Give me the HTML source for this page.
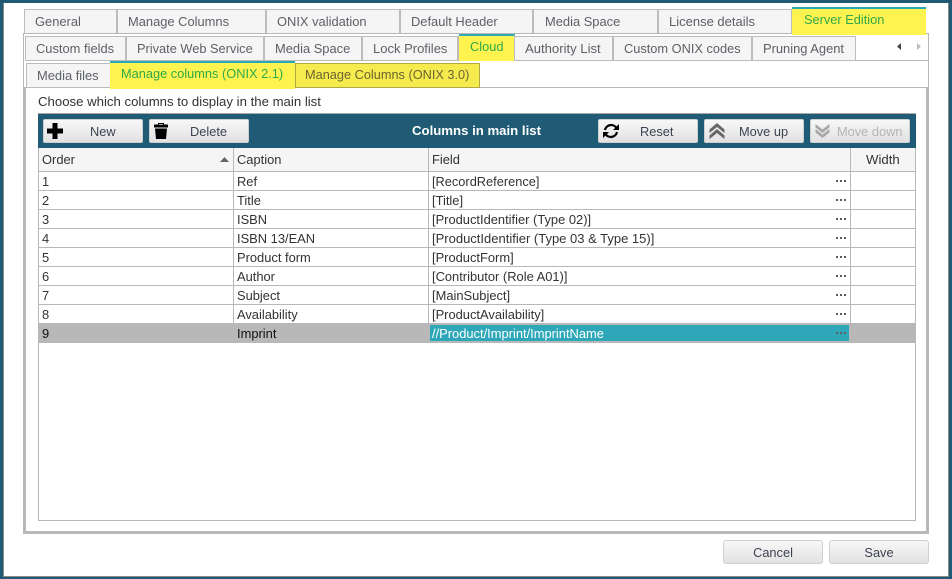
<!DOCTYPE html>
<html><head><meta charset="utf-8"><style>
*{box-sizing:border-box}
html,body{margin:0;padding:0;width:952px;height:579px;overflow:hidden;background:#fff}
body{position:relative;font:13px/18px "Liberation Sans",Arial,sans-serif;color:#333}
.a,.t,.b,.x{position:absolute}
.t{height:25px;background:#f5f5f5;border:solid #bcbcbc;border-width:1px 2px 1px 0;color:#5e6068;font-size:12.9px;line-height:21px;white-space:nowrap}
.t span{position:absolute;top:1px}
.t.f{border-left-width:1px}
.y{background:#fff350;border:0;border-top:2px solid #2aa8b8;color:#2ea84a;font-size:12.8px;white-space:nowrap;position:absolute}
.y span{position:absolute;line-height:18px}
.b{top:119px;height:24px;width:100px;border:1px solid #cfcfcf;border-radius:2px;background:linear-gradient(#f8f8f8,#e2e2e2);font-size:12.8px;line-height:23px;color:#3d4250;text-align:center;white-space:nowrap}
.b span{position:absolute;top:0}
.b svg{position:absolute}
.d{position:absolute;width:10px;height:2px;left:836px;background:linear-gradient(90deg,#5c5c5c 0 2px,transparent 2px 4px,#5c5c5c 4px 6px,transparent 6px 8px,#5c5c5c 8px 10px)}
.c{position:absolute;font-size:12.9px;line-height:18px;color:#333;white-space:nowrap}
.l{position:absolute;background:#b8b8b8}
</style></head><body>
<!-- window frame -->
<div class="a" style="left:0;top:0;width:952px;height:3px;background:#1f5b75"></div>
<div class="a" style="left:0;top:0;width:3px;height:579px;background:#1f5b75"></div>
<div class="a" style="left:949px;top:0;width:3px;height:579px;background:#1f5b75"></div>
<div class="a" style="left:0;top:577px;width:952px;height:2px;background:#1f5b75"></div>
<div class="a" style="left:3px;top:3px;width:1px;height:574px;background:#8a8a8a"></div>
<div class="a" style="left:948px;top:3px;width:1px;height:574px;background:#8a8a8a"></div>
<div class="a" style="left:3px;top:576px;width:946px;height:1px;background:#8a8a8a"></div>

<!-- row 1 tabs -->
<div class="t f" style="left:24px;top:9px;width:94px"><span style="left:10px">General</span></div>
<div class="t" style="left:118px;top:9px;width:149px"><span style="left:10px">Manage Columns</span></div>
<div class="t" style="left:267px;top:9px;width:134px"><span style="left:10px">ONIX validation</span></div>
<div class="t" style="left:401px;top:9px;width:133px"><span style="left:10px">Default Header</span></div>
<div class="t" style="left:534px;top:9px;width:125px"><span style="left:11px">Media Space</span></div>
<div class="t" style="left:659px;top:9px;width:134px"><span style="left:10px;font-size:13px">License details</span></div>

<!-- panel -->
<div class="l" style="left:23px;top:33px;width:906px;height:1px"></div>
<div class="l" style="left:23px;top:33px;width:1px;height:54px"></div>
<div class="l" style="left:928px;top:33px;width:1px;height:54px"></div>
<div class="l" style="left:23px;top:87px;width:3px;height:447px"></div>
<div class="l" style="left:926px;top:87px;width:3px;height:447px"></div>
<div class="l" style="left:23px;top:531px;width:906px;height:3px"></div>
<div class="y" style="left:792px;top:7px;width:134px;height:28px"><span style="left:12px;top:2px">Server Edition</span></div>

<!-- row 2 tabs -->
<div class="l" style="left:25px;top:60px;width:903px;height:1px"></div>
<div class="t f" style="left:25px;top:36px;width:102px"><span style="left:10px">Custom fields</span></div>
<div class="t" style="left:127px;top:36px;width:138px"><span style="left:10px;font-size:12.8px">Private Web Service</span></div>
<div class="t" style="left:265px;top:36px;width:98px"><span style="left:10px">Media Space</span></div>
<div class="t" style="left:363px;top:36px;width:96px"><span style="left:10px;font-size:13px">Lock Profiles</span></div>
<div class="y" style="left:459px;top:34px;width:56px;height:27px;border-right:1px solid #bcbcbc"><span style="left:11px;top:2px">Cloud</span></div>
<div class="t" style="left:515px;top:36px;width:99px"><span style="left:10px;font-size:13.1px">Authority List</span></div>
<div class="t" style="left:614px;top:36px;width:139px"><span style="left:10px;font-size:12.8px">Custom ONIX codes</span></div>
<div class="t" style="left:753px;top:36px;width:103px;border-right-width:1px"><span style="left:10px">Pruning Agent</span></div>
<svg class="x" style="left:896px;top:43px" width="26" height="8"><path d="M5 0v7L1 3.500z" fill="#444"/><path d="M21 0v7l4-3.500z" fill="#bbb"/></svg>

<!-- row 3 tabs -->
<div class="l" style="left:26px;top:87px;width:901px;height:1px"></div>
<div class="t f" style="left:26px;top:63px;width:85px;border-right-width:1px"><span style="left:10px">Media files</span></div>
<div class="y" style="left:110px;top:61px;width:185px;height:28px"><span style="left:11px;top:2px">Manage columns (ONIX 2.1)</span></div>
<div class="a" style="left:295px;top:63px;width:185px;height:25px;background:#f5ea4e;border:1px solid #b0a840;font-size:12.75px;line-height:22px;color:#6b6430;white-space:nowrap;padding-left:9px">Manage Columns (ONIX 3.0)</div>

<div class="c" style="left:38px;top:93px;font-size:13.200px">Choose which columns to display in the main list</div>

<!-- toolbar -->
<div class="a" style="left:38px;top:113px;width:878px;height:35px;background:#1f5b75;border-top:1px solid #a8a8a8"></div>
<div class="b" style="left:43px"><svg style="left:3px;top:3px" width="16" height="16"><path d="M5.500 0h5v5.500H16v5h-5.500V16h-5v-5.500H0v-5h5.500z" fill="#000"/></svg><span style="left:46px">New</span></div>
<div class="b" style="left:149px"><svg style="left:4px;top:3px" width="14" height="16"><path d="M4 0h6v1.500h4V4.500H0V1.500h4zM5 1v.8h4V1zM1 5.500h12L12 16H2z" fill="#000" fill-rule="evenodd"/></svg><span style="left:40px">Delete</span></div>
<div class="a" style="left:412px;top:122px;font-size:13.200px;line-height:18px;font-weight:bold;color:#fff;white-space:nowrap">Columns in main list</div>
<div class="b" style="left:598px"><svg style="left:4px;top:3px" width="16" height="16" fill="none" stroke="#000" stroke-width="2.200"><path d="M2 7a6.300 6.300 0 0 1 11.500-2M14 9a6.300 6.300 0 0 1-11.500 2"/><path d="M16 1v6h-6zM0 15V9h6z" fill="#000" stroke="none"/></svg><span style="left:41px">Reset</span></div>
<div class="b" style="left:704px"><svg style="left:4px;top:3px" width="16" height="16"><path d="M8 0l7.500 6.500V10L8 4 .5 10V6.500zM8 6l7.500 6.500V16L8 10 .5 16v-3.500z" fill="#666"/></svg><span style="left:34px">Move up</span></div>
<div class="b" style="left:810px;color:#b4b4b4"><svg style="left:4px;top:4px" width="15" height="14"><path d="M.5 0L7.500 5.500 14.500 0v3.500L7.500 9 .5 3.500zM.5 5L7.500 10.500 14.500 5v3.500L7.500 14 .5 8.500z" fill="#a8a8a8"/></svg><span style="left:26px">Move down</span></div>

<!-- grid -->
<div class="a" style="left:38px;top:148px;width:878px;height:373px;border:1px solid #b8b8b8;border-top:0"></div>
<div class="a" style="left:39px;top:148px;width:876px;height:23px;background:#f5f5f5"></div>
<div class="l" style="left:39px;top:171px;width:876px;height:1px"></div>
<div class="l" style="left:233px;top:148px;width:1px;height:175px"></div>
<div class="l" style="left:428px;top:148px;width:1px;height:175px"></div>
<div class="l" style="left:850px;top:148px;width:1px;height:175px"></div>
<div class="l" style="left:39px;top:190px;width:876px;height:1px"></div>
<div class="l" style="left:39px;top:209px;width:876px;height:1px"></div>
<div class="l" style="left:39px;top:228px;width:876px;height:1px"></div>
<div class="l" style="left:39px;top:247px;width:876px;height:1px"></div>
<div class="l" style="left:39px;top:266px;width:876px;height:1px"></div>
<div class="l" style="left:39px;top:285px;width:876px;height:1px"></div>
<div class="l" style="left:39px;top:304px;width:876px;height:1px"></div>
<div class="a" style="left:39px;top:323px;width:876px;height:20px;background:#b8b8b8"></div>
<div class="a" style="left:430px;top:325px;width:419px;height:16px;background:#2ea8b8"></div>

<div class="c" style="left:42px;top:151px">Order</div>
<svg class="x" style="left:220px;top:157px" width="9" height="5"><path d="M0 5L4.500 0 9 5z" fill="#666"/></svg>
<div class="c" style="left:237px;top:151px">Caption</div>
<div class="c" style="left:432px;top:151px">Field</div>
<div class="c" style="left:866px;top:151px;font-size:13.200px">Width</div>

<div class="c" style="left:42px;top:173px">1</div><div class="c" style="left:237px;top:173px">Ref</div><div class="c" style="left:432px;top:173px;font-size:12.8px">[RecordReference]</div><div class="d" style="top:180px"></div>
<div class="c" style="left:42px;top:192px">2</div><div class="c" style="left:237px;top:192px">Title</div><div class="c" style="left:432px;top:192px">[Title]</div><div class="d" style="top:199px"></div>
<div class="c" style="left:42px;top:211px">3</div><div class="c" style="left:237px;top:211px">ISBN</div><div class="c" style="left:432px;top:211px">[ProductIdentifier (Type 02)]</div><div class="d" style="top:218px"></div>
<div class="c" style="left:42px;top:230px">4</div><div class="c" style="left:237px;top:230px">ISBN 13/EAN</div><div class="c" style="left:432px;top:230px;font-size:13px">[ProductIdentifier (Type 03 &amp; Type 15)]</div><div class="d" style="top:237px"></div>
<div class="c" style="left:42px;top:249px">5</div><div class="c" style="left:237px;top:249px">Product form</div><div class="c" style="left:432px;top:249px">[ProductForm]</div><div class="d" style="top:256px"></div>
<div class="c" style="left:42px;top:268px">6</div><div class="c" style="left:237px;top:268px">Author</div><div class="c" style="left:432px;top:268px">[Contributor (Role A01)]</div><div class="d" style="top:275px"></div>
<div class="c" style="left:42px;top:287px">7</div><div class="c" style="left:237px;top:287px">Subject</div><div class="c" style="left:432px;top:287px">[MainSubject]</div><div class="d" style="top:294px"></div>
<div class="c" style="left:42px;top:306px">8</div><div class="c" style="left:237px;top:306px">Availability</div><div class="c" style="left:432px;top:306px">[ProductAvailability]</div><div class="d" style="top:313px"></div>
<div class="c" style="left:42px;top:325px;color:#111">9</div><div class="c" style="left:237px;top:325px;color:#111">Imprint</div><div class="c" style="left:432px;top:325px;color:#fff">//Product/Imprint/ImprintName</div><div class="d" style="top:332px"></div>

<!-- footer -->
<div class="b" style="left:723px;top:540px;height:24px;line-height:24px;border-radius:3px">Cancel</div>
<div class="b" style="left:829px;top:540px;height:24px;line-height:24px;border-radius:3px">Save</div>
</body></html>
